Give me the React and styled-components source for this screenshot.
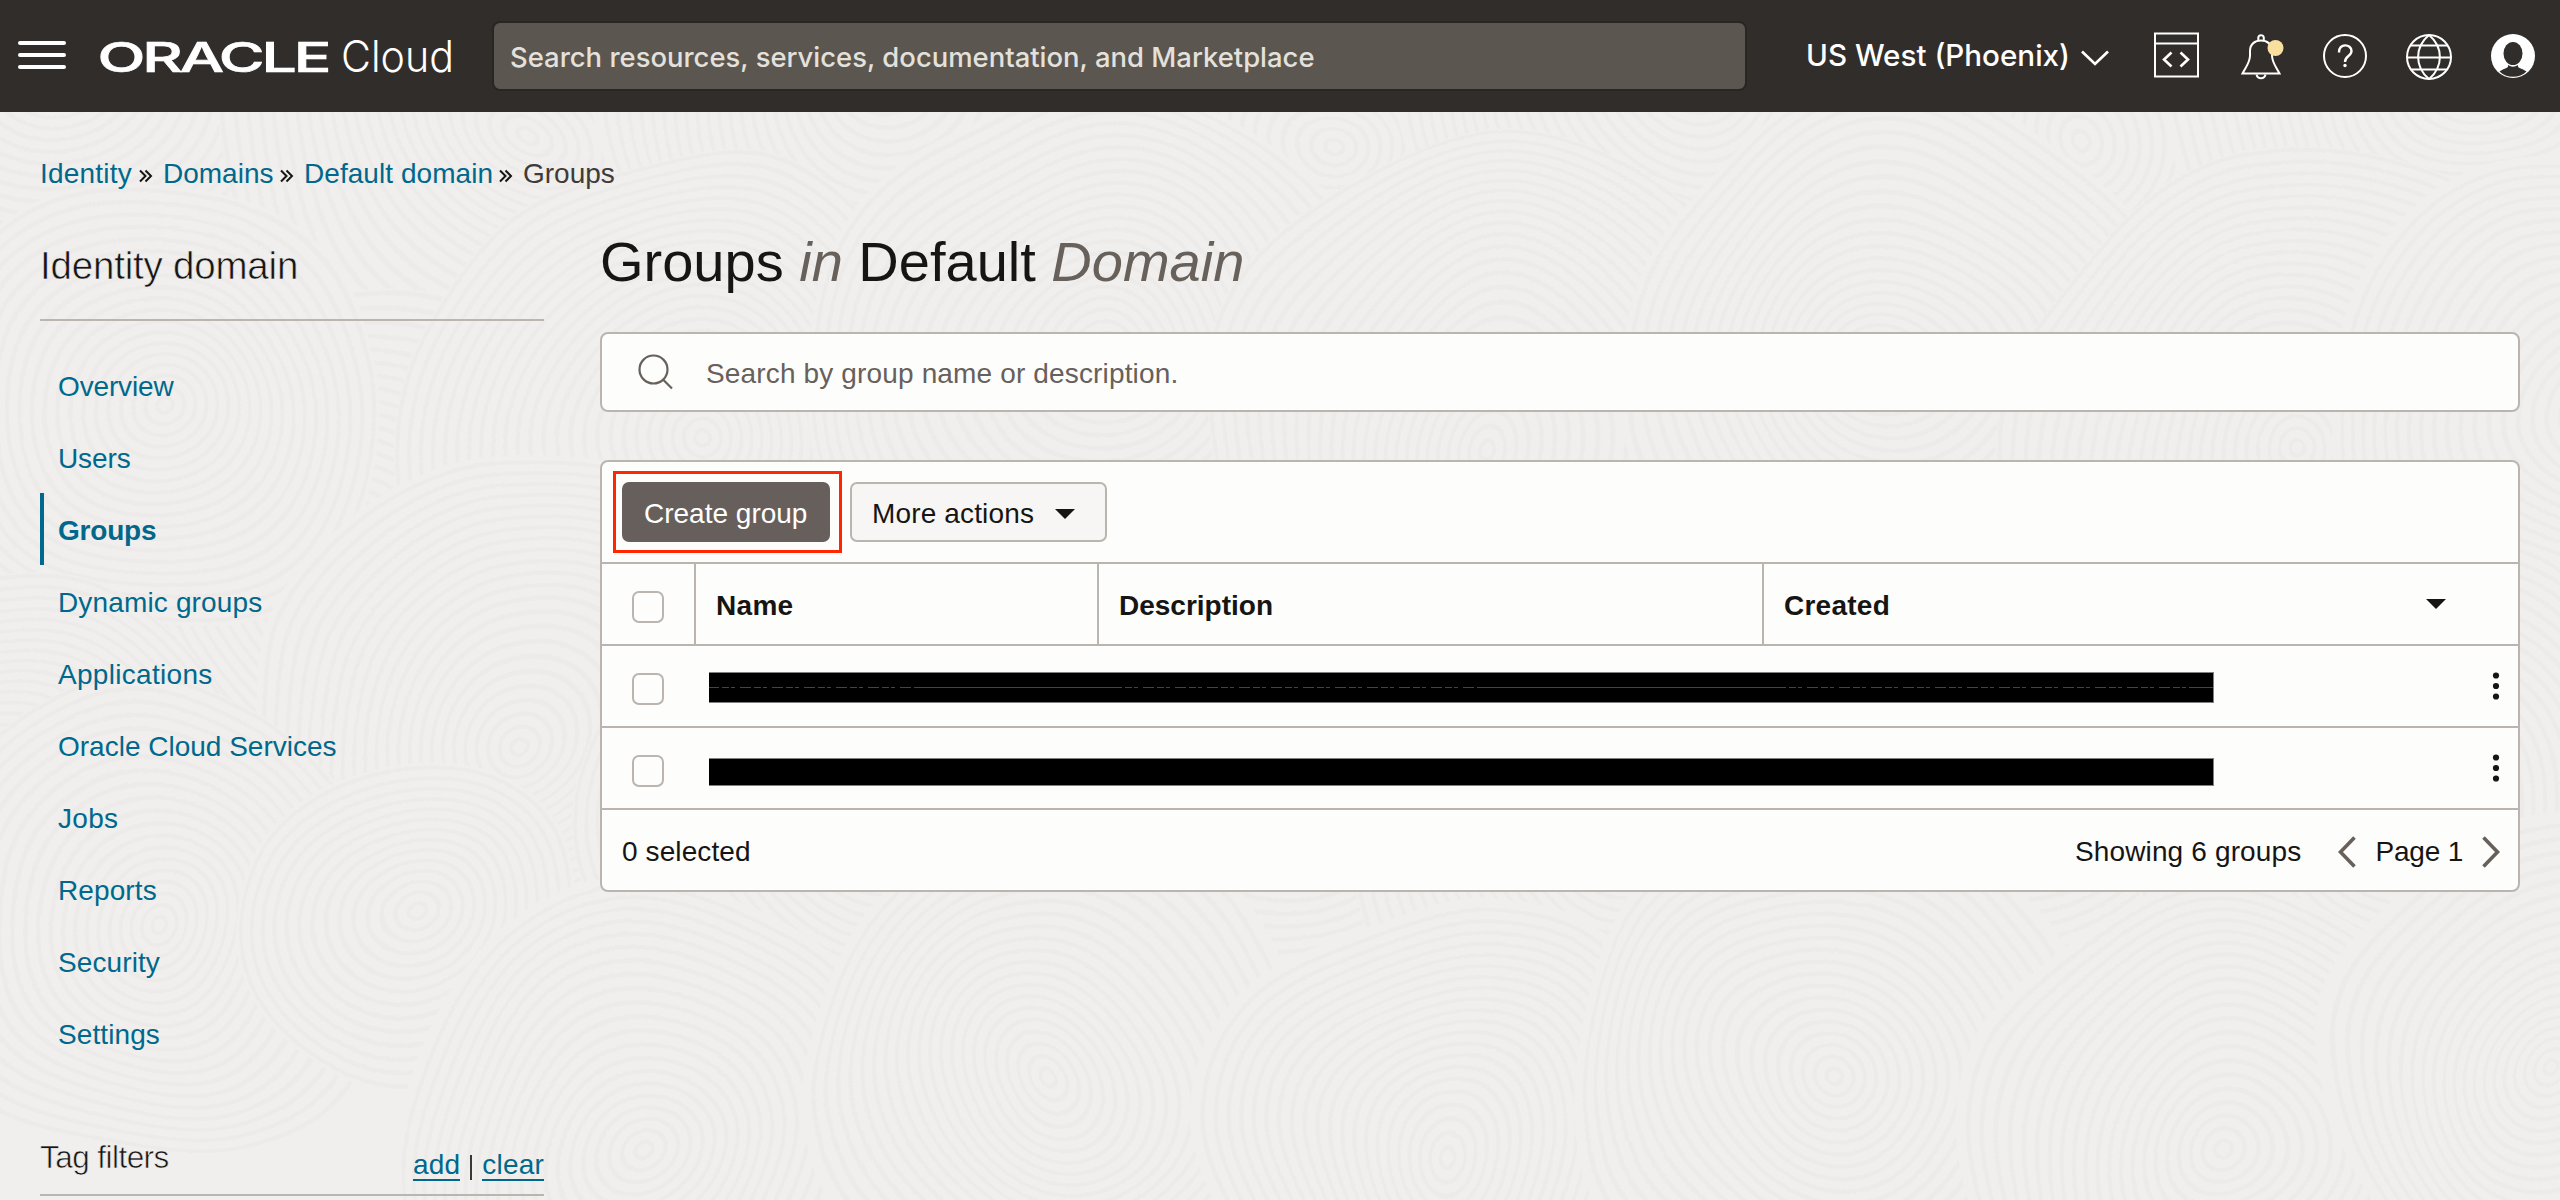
import React from "react";
import styled, { createGlobalStyle } from "styled-components";

const sans = '"Liberation Sans", Arial, sans-serif';
const LINE = "#bbb5af";
const LINK = "#00688c";
const INK = "#161513";

const Global = createGlobalStyle`
  *, *::before, *::after { box-sizing: border-box; }
  body { margin: 0; background: #f0efed; font-family: ${sans}; font-size: 28px; color: ${INK}; }
`;

const Page = styled.div`
  position: relative;
  width: 2560px;
  height: 1200px;
  overflow: hidden;
  background: #f0efed;
`;

const Texture = styled.svg`
  position: absolute;
  inset: 112px 0 0 0;
  z-index: 0;
`;

const T = styled.span`
  white-space: pre;
  letter-spacing: ${(p) => p.$ls || 0}px;
`;

/* ---------- header ---------- */
const Header = styled.header`
  position: relative;
  z-index: 1;
  display: flex;
  align-items: center;
  height: 112px;
  padding: 0 22px 0 18px;
  background: #312d2a;
  color: #fff;
`;

const MenuButton = styled.div`
  display: flex;
  flex-direction: column;
  gap: 8px;
  width: 48px;
  margin-bottom: 2px;
`;

const MenuBar = styled.span`
  height: 4px;
  border-radius: 2px;
  background: #fff;
`;

const Logo = styled.svg`
  flex: none;
  width: 370px;
  height: 60px;
  margin-left: 30px;
`;

const GlobalSearch = styled.div`
  flex: none;
  display: flex;
  align-items: center;
  width: 1255px;
  height: 70px;
  margin-left: 26px;
  padding: 1px 0 0 16px;
  border: 2px solid #292522;
  border-radius: 8px;
  background: #5b564f;
  color: #e4e1dd;
  font: 500 27.45px "Inter", ${sans};
`;

const Region = styled.div`
  flex: none;
  display: flex;
  align-items: center;
  justify-content: space-between;
  width: 303px;
  margin-left: 59px;
  font: 500 29.6px "Inter", ${sans};
`;

const RegionName = styled.span`
  margin-bottom: 2px;
  white-space: pre;
`;

const RegionArrow = styled.span`
  margin-top: 4px;
`;

const HeaderIcons = styled.div`
  display: flex;
  align-items: center;
  gap: 36px;
  margin-left: 44px;
`;

const Icon = styled.svg`
  display: block;
  flex: none;
  fill: none;
`;

/* ---------- page frame ---------- */
const Breadcrumbs = styled.nav`
  position: relative;
  display: flex;
  align-items: center;
  height: 40px;
  margin: 42px 0 0 40px;
`;

const Crumb = styled.span`
  width: ${(p) => (p.$w ? `${p.$w}px` : "auto")};
  color: ${(p) => (p.$current ? "#3f3b38" : LINK)};
  white-space: pre;
  letter-spacing: ${(p) => p.$ls || 0}px;
`;

const CrumbMark = styled.svg`
  width: 14px;
  height: 14px;
  margin: 3px 10px 0 6px;
  fill: none;
`;

const Body = styled.div`
  position: relative;
  display: flex;
  gap: 56px;
  margin-top: -1px;
  padding: 0 40px;
`;

/* ---------- sidebar ---------- */
const Sidebar = styled.aside`
  flex: none;
  width: 504px;
`;

/* Trims the regular weight down to a light one. */
const LightText = styled(T)`
  -webkit-text-stroke: 0.6px #f0efed;
`;

const SideTitle = styled.h2`
  margin: 0;
  padding: 47px 0 27px;
  border-bottom: 2px solid ${LINE};
  font-size: 38.5px;
  font-weight: 400;
  line-height: 52px;
`;

const SideNav = styled.nav`
  display: flex;
  flex-direction: column;
  margin-top: 28px;
`;

const SideLink = styled.a`
  display: flex;
  align-items: center;
  height: 72px;
  padding: 3px 0 0 14px;
  border-left: 4px solid ${(p) => (p.$active ? LINK : "transparent")};
  color: ${LINK};
  font-weight: ${(p) => (p.$active ? 700 : 400)};
`;

const TagFilters = styled.div`
  display: flex;
  justify-content: space-between;
  height: 127px;
  padding-top: 68px;
  border-bottom: 2px solid ${LINE};
  line-height: 40px;
`;

const TagTitle = styled.span`
  font-size: 31.5px;
`;

const TagActions = styled.span`
  display: flex;
  align-items: center;
  height: 40px;
  margin-top: 8px;
`;

const TagLink = styled.a`
  height: 33px;
  line-height: 34px;
  margin-top: -2px;
  border-bottom: 2px solid ${LINK};
  color: ${LINK};
  letter-spacing: 0.2px;
`;

const Pipe = styled.span`
  width: 2px;
  height: 25px;
  margin: 5px 10px 0 10px;
  background: #3a3735;
`;

/* ---------- content ---------- */
const Content = styled.main`
  flex: 1;
  padding-top: 37px;
`;

const Title = styled.h1`
  margin: 0 0 38px;
  font-size: 56px;
  font-weight: 400;
  line-height: 64px;
  white-space: pre;
  em { color: #67605b; }
`;

const SearchBox = styled.div`
  display: flex;
  align-items: center;
  gap: 32px;
  height: 80px;
  padding: 0 0 0 36px;
  border: 2px solid ${LINE};
  border-radius: 8px;
  background: #fdfdfb;
  color: #67605b;
`;

const Placeholder = styled.span`
  padding-top: 3px;
  letter-spacing: 0.15px;
`;

const Panel = styled.section`
  height: 432px;
  margin-top: 48px;
  border: 2px solid ${LINE};
  border-radius: 8px;
  background: #fdfdfb;
`;

const Toolbar = styled.div`
  position: relative;
  display: flex;
  align-items: center;
  gap: 20px;
  height: 100px;
  padding: 0 20px;
`;

const Button = styled.button`
  display: flex;
  align-items: center;
  justify-content: space-between;
  width: ${(p) => p.$w}px;
  height: 60px;
  padding: 3px ${(p) => (p.$primary ? 0 : 30)}px 0 ${(p) => (p.$primary ? 22 : 20)}px;
  border: ${(p) => (p.$primary ? "none" : `2px solid ${LINE}`)};
  border-radius: 7px;
  background: ${(p) => (p.$primary ? "#675f5b" : "#f7f6f4")};
  color: ${(p) => (p.$primary ? "#fff" : INK)};
  font: 400 28px ${sans};
`;

const Highlight = styled.div`
  position: absolute;
  left: 11px;
  top: 9px;
  width: 229px;
  height: 82px;
  border: 3px solid #ff2600;
`;

const Row = styled.div`
  display: grid;
  grid-template-columns: 94px 403px 665px 1fr;
  height: 82px;
  border-top: 2px solid ${LINE};
`;

const HeadCell = styled.div`
  display: flex;
  align-items: center;
  justify-content: space-between;
  padding: 3px 72px 0 20px;
  border-right: ${(p) => (p.$last ? "none" : `2px solid ${LINE}`)};
  font-weight: 700;
`;

const SortMark = styled.span`
  margin-bottom: 4px;
`;

const CheckCell = styled.div`
  padding: 27px 0 0 30px;
  border-right: ${(p) => (p.$ruled ? `2px solid ${LINE}` : "none")};
`;

const Checkbox = styled.div`
  width: 32px;
  height: 32px;
  border: 2px solid ${LINE};
  border-radius: 7px;
  background: #fdfdfb;
`;

const RowBody = styled.div`
  grid-column: 2 / -1;
  display: flex;
  align-items: flex-start;
  justify-content: space-between;
  padding: 26px 18px 0 13px;
`;

const Redaction = styled.svg`
  flex: none;
  display: block;
  width: 1505px;
`;

const Footer = styled.div`
  display: flex;
  align-items: center;
  height: 82px;
  padding: 4px 18px 0 20px;
  border-top: 2px solid ${LINE};
`;

const Pager = styled.div`
  display: flex;
  align-items: center;
  gap: 19px;
  margin-left: 37px;
`;

const Spacer = styled.div`
  flex: 1;
`;

/* Overlapping families of rings; each disc hides those drawn before it. */
const discs = [
  [60, -60, 320], [520, 20, 300], [900, -40, 320], [1320, 30, 300], [1700, -50, 320], [2080, 20, 300], [2480, -30, 320],
  [340, 480, 300], [700, 330, 300], [1100, 260, 280], [1500, 320, 300], [1900, 260, 280], [2300, 330, 300], [2600, 300, 260],
  [155, 300, 230], [520, 620, 280], [0, 700, 240], [880, 700, 300], [1260, 640, 280], [1640, 720, 300], [2020, 640, 280], [2400, 700, 290],
  [155, 820, 240], [415, 795, 170], [650, 1040, 260], [1060, 960, 260], [1450, 1040, 260], [1840, 960, 260], [2220, 1030, 260], [2560, 960, 250],
];

function Rings() {
  return (
    <Texture width="2560" height="1088" viewBox="0 0 2560 1088" aria-hidden="true">
      <filter id="ripple" x="0" y="0" width="2560" height="1088" filterUnits="userSpaceOnUse" colorInterpolationFilters="sRGB">
        <feTurbulence type="fractalNoise" baseFrequency="0.004" numOctaves="1" seed="4" />
        <feDisplacementMap in="SourceGraphic" scale="90" xChannelSelector="R" yChannelSelector="G" />
      </filter>
      <g filter="url(#ripple)">
        {discs.map(([x, y, r], i) => (
          <g key={i} fill="none" stroke="#ecebe9" strokeWidth="4">
            <circle cx={x} cy={y} r={r} fill="#f0efed" stroke="none" />
            {Array.from({ length: Math.floor(r / 12) }, (_, k) => (
              <circle key={k} cx={x} cy={y} r={(k + 0.7) * 12} />
            ))}
          </g>
        ))}
      </g>
    </Texture>
  );
}

function CodeIcon() {
  return (
    <Icon width="48" height="48" viewBox="0 0 48 48" stroke="#fff" strokeWidth="2">
      <rect x="2" y="1" width="43" height="43" transform="translate(0 .5)" />
      <path d="M2 11.5H45" />
      <path d="M18.500 20.500l-7.500 7 7.500 7M27.500 20.500l7.500 7-7.500 7" strokeWidth="2.6" />
    </Icon>
  );
}

function BellIcon() {
  return (
    <Icon width="48" height="48" viewBox="0 0 48 48" stroke="#fff" strokeWidth="2">
      <path d="M5.500 41.500C9.500 34 12.500 31 13 24V19C13 12 18 8.500 24 8.500S35 12 35 19V24C35.500 31 38.500 34 42.500 41.500Z" />
      <path d="M21.300 8.500V5.500a2.800 2.800 0 0 1 5.500 0V8.500M19.500 42.500a4.600 4.600 0 0 0 9 0" />
      <circle cx="38.500" cy="16" r="8" fill="#f8dfa0" stroke="none" />
    </Icon>
  );
}

function HelpIcon() {
  return (
    <Icon width="48" height="48" viewBox="0 0 48 48" stroke="#fff" strokeWidth="2">
      <circle cx="24" cy="24" r="21" />
      <path d="M18 20.500C17.500 11 30.500 11.500 30.500 19C30.500 24.500 24 23.500 24 30" strokeWidth="2.400" />
      <circle cx="24" cy="33.500" r="1.700" fill="#fff" stroke="none" />
    </Icon>
  );
}

function GlobeIcon() {
  return (
    <Icon width="48" height="48" viewBox="0 0 48 48" stroke="#fff" strokeWidth="2">
      <circle cx="24" cy="25" r="22" />
      <path d="M24 3C9.500 15 9.500 35 24 47M24 3C38.500 15 38.500 35 24 47M6 13.500H42M2 25.500H46M6 37.500H42" />
    </Icon>
  );
}

function AvatarIcon() {
  return (
    <Icon width="48" height="48" viewBox="0 0 48 48">
      <circle cx="24" cy="24" r="22" fill="#fff" />
      <ellipse cx="24" cy="21.500" rx="9.500" ry="11.500" fill="#312d2a" />
      <path d="M19 33V34.500C18.500 36.500 13.500 37 10.500 39.500C17 46.500 31 46.500 37.500 39.500C34.500 37 29.500 36.500 29 34.500V33Q24 36.500 19 33Z" fill="#312d2a" />
    </Icon>
  );
}

function Kebab() {
  return (
    <Icon width="8" height="30" viewBox="0 0 8 30">
      {[3.5, 14, 24.5].map((y) => (
        <circle key={y} cx="4" cy={y} r="3.100" fill={INK} />
      ))}
    </Icon>
  );
}

function Caret() {
  return (
    <Icon width="20" height="10" viewBox="0 0 20 10">
      <path d="M0 0H20L10 10Z" fill={INK} />
    </Icon>
  );
}

function Chevron({ right }) {
  return (
    <Icon width="18" height="32" viewBox="0 0 18 32" stroke="#67605b" strokeWidth="3.600">
      <path d={right ? "M1.500 1.500L15.500 16L1.500 30.500" : "M16.500 1.500L2.500 16L16.500 30.500"} />
    </Icon>
  );
}

const links = [
  ["Overview", -0.15], ["Users", -0.1], ["Groups", -0.2], ["Dynamic groups", 0.15], ["Applications", 0.3],
  ["Oracle Cloud Services", 0], ["Jobs", 0.3], ["Reports", 0.1], ["Security", 0.1], ["Settings", 0.1],
];

const crumbs = [["Identity", 93, 0.2], ["Domains", 111, 0], ["Default domain", 189, 0.05]];

export default function App() {
  return (
    <Page>
      <Global />
      <Rings />
      <Header>
        <MenuButton>
          <MenuBar />
          <MenuBar />
          <MenuBar />
        </MenuButton>
        <Logo viewBox="0 0 370 60" fill="#fff">
          <text x="1.500" y="46" fontFamily="Inter, sans-serif" fontSize="41" fontWeight="500" letterSpacing="-2" stroke="#fff" strokeWidth=".7" textLength="231" lengthAdjust="spacingAndGlyphs">ORACLE</text>
          <text x="245" y="46" fontFamily="Inter, sans-serif" fontSize="43" fontWeight="300" textLength="113" lengthAdjust="spacingAndGlyphs">Cloud</text>
        </Logo>
        <GlobalSearch>
          <T>Search resources, services, documentation, and Marketplace</T>
        </GlobalSearch>
        <Region>
          <RegionName>US West (Phoenix)</RegionName>
          <RegionArrow>
            <Icon width="28" height="16" viewBox="0 0 28 16" stroke="#fff" strokeWidth="2.700">
              <path d="M1 1.500L14 14L27 1.500" />
            </Icon>
          </RegionArrow>
        </Region>
        <HeaderIcons>
          <CodeIcon />
          <BellIcon />
          <HelpIcon />
          <GlobeIcon />
          <AvatarIcon />
        </HeaderIcons>
      </Header>

      <Breadcrumbs>
        {crumbs.map(([name, w, ls]) => (
          <React.Fragment key={name}>
            <Crumb $w={w} $ls={ls}>{name}</Crumb>
            <CrumbMark viewBox="0 0 14 14" stroke={INK} strokeWidth="2">
              <path d="M1 1.500L6.500 7L1 12.500M6.500 1.500L12 7L6.500 12.500" />
            </CrumbMark>
          </React.Fragment>
        ))}
        <Crumb $current>Groups</Crumb>
      </Breadcrumbs>

      <Body>
        <Sidebar>
          <SideTitle><LightText $ls={-0.2}>Identity domain</LightText></SideTitle>
          <SideNav>
            {links.map(([name, ls]) => (
              <SideLink key={name} $active={name === "Groups"}>
                <T $ls={ls}>{name}</T>
              </SideLink>
            ))}
          </SideNav>
          <TagFilters>
            <TagTitle><LightText $ls={-0.55}>Tag filters</LightText></TagTitle>
            <TagActions>
              <TagLink>add</TagLink>
              <Pipe />
              <TagLink>clear</TagLink>
            </TagActions>
          </TagFilters>
        </Sidebar>

        <Content>
          <Title>Groups <em>in</em> Default <em>Domain</em></Title>
          <SearchBox>
            <Icon width="36" height="36" viewBox="0 0 36 36" stroke="#67605b" strokeWidth="2.200">
              <circle cx="15.500" cy="15.500" r="14" />
              <path d="M25.500 26L34 34.500" />
            </Icon>
            <Placeholder>Search by group name or description.</Placeholder>
          </SearchBox>

          <Panel>
            <Toolbar>
              <Button $primary $w={208}><T>Create group</T></Button>
              <Button $w={257}>
                <T $ls={0.15}>More actions</T>
                <Caret />
              </Button>
              <Highlight />
            </Toolbar>
            <Row>
              <CheckCell $ruled><Checkbox /></CheckCell>
              <HeadCell><T $ls={0.3}>Name</T></HeadCell>
              <HeadCell><T>Description</T></HeadCell>
              <HeadCell $last>
                <T $ls={0.25}>Created</T>
                <SortMark><Caret /></SortMark>
              </HeadCell>
            </Row>
            <Row>
              <CheckCell><Checkbox /></CheckCell>
              <RowBody>
                <Redaction height="31" viewBox="0 0 1505 31">
                  <rect width="1505" height="31" fill="#808080" />
                  <rect y="1" width="1504" height="29" fill="#000" />
                  <path d="M0 15.500H1504" stroke="#444" strokeWidth="1" />
                  <path d="M10 15.500H210M413 15.500H772M1077 15.500H1480" stroke="#000" strokeWidth="1" strokeDasharray="3 7 2 4 5 11" />
                </Redaction>
                <Kebab />
              </RowBody>
            </Row>
            <Row>
              <CheckCell><Checkbox /></CheckCell>
              <RowBody>
                <Redaction height="32" viewBox="0 0 1505 32">
                  <rect y="4" width="1505" height="28" fill="#808080" />
                  <rect y="5" width="1504" height="26" fill="#000" />
                </Redaction>
                <Kebab />
              </RowBody>
            </Row>
            <Footer>
              <T $ls={0.1}>0 selected</T>
              <Spacer />
              <T $ls={0.15}>Showing 6 groups</T>
              <Pager>
                <Chevron />
                <T $ls={-0.2}>Page 1</T>
                <Chevron right />
              </Pager>
            </Footer>
          </Panel>
        </Content>
      </Body>
    </Page>
  );
}
